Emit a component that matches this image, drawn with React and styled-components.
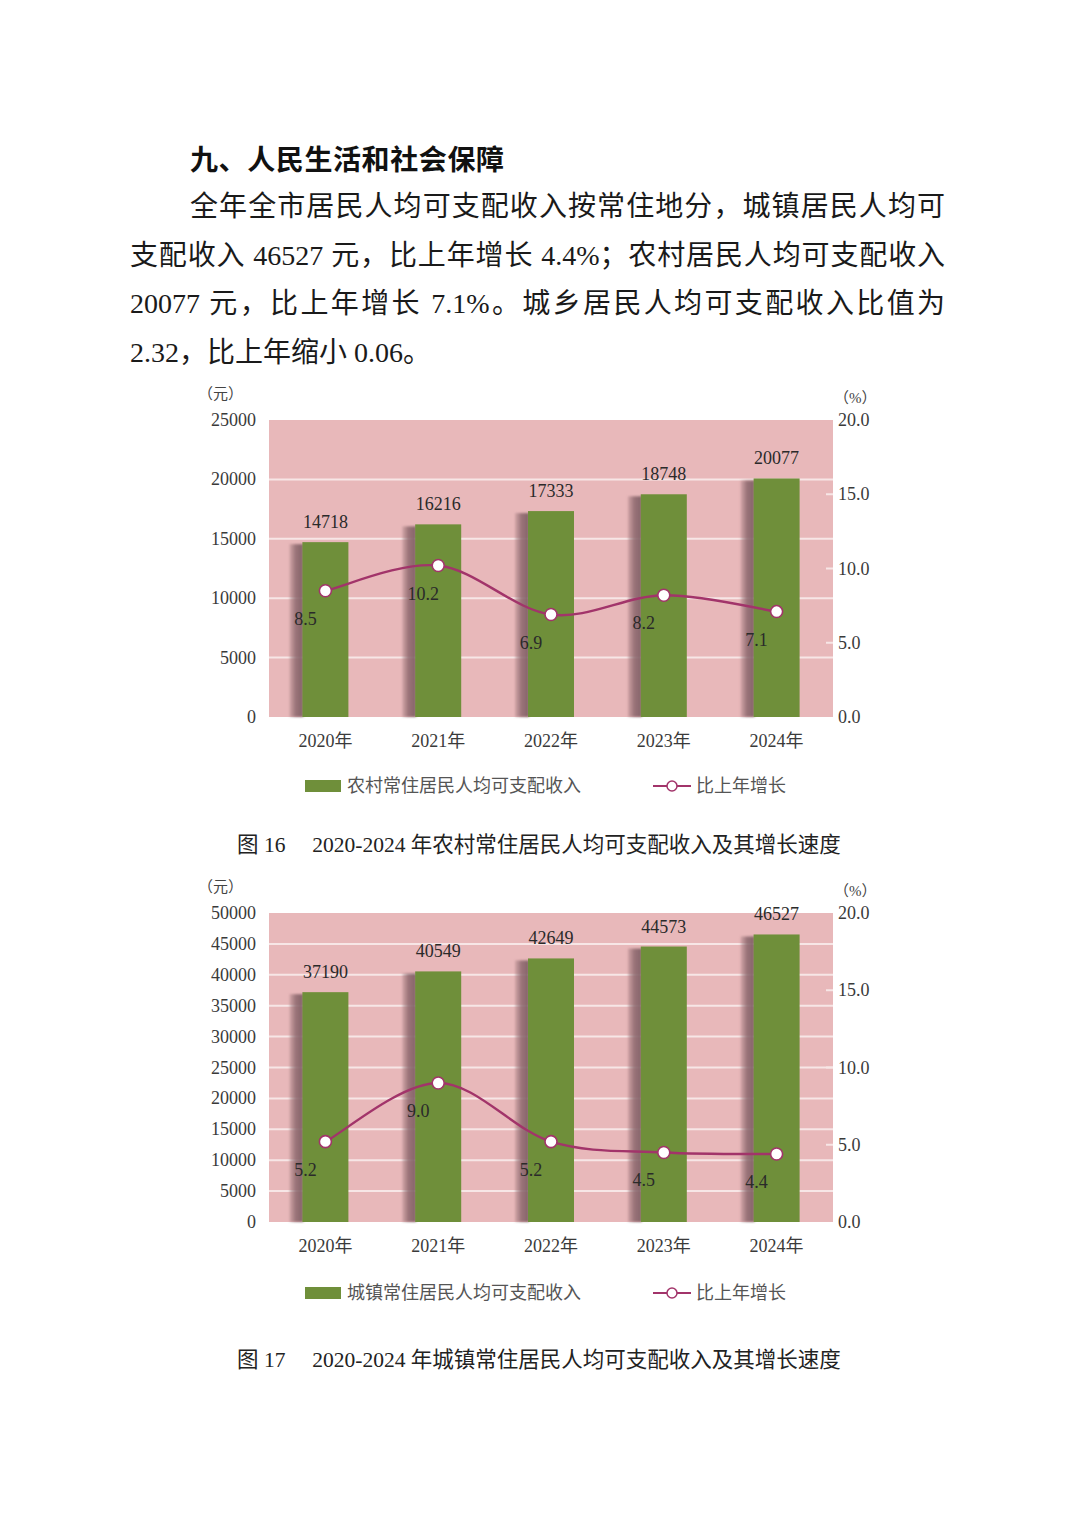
import React from "react";
import styled, { createGlobalStyle } from "styled-components";

const GlobalStyle = createGlobalStyle`
  html, body { margin: 0; padding: 0; background: #ffffff; }
  body { font-family: "Liberation Serif", "Noto Sans CJK SC", serif; color: #1a1a1a; }
`;

const Page = styled.main`
  width: 1074px;
  min-height: 1520px;
  box-sizing: border-box;
  padding: 134px 129px 0 130px;
`;

const Heading = styled.h2`
  margin: 0;
  padding-left: 60px;
  font-family: "Noto Sans CJK SC", sans-serif;
  font-weight: 700;
  font-size: 28px;
  letter-spacing: 0.6px;
  line-height: 49px;
  color: #111;
`;

const Para = styled.div`
  font-family: "Liberation Serif", "Noto Sans CJK SC", serif;
  font-size: 28px;
  line-height: 48.7px;
  color: #1a1a1a;
`;

const Line = styled.div`
  text-align: justify;
  text-align-last: ${(p) => (p.$last ? "left" : "justify")};
  text-indent: ${(p) => (p.$indent ? "60px" : "0")};
`;

const Figure = styled.figure`
  margin: ${(p) => p.$top}px 0 0 0;
  padding: 0;
`;

const ChartSvg = styled.svg`
  display: block;
  margin-left: 60px;
  overflow: visible;
`;

const AxisText = styled.text`
  font-family: "Liberation Serif", "Noto Sans CJK SC", serif;
  font-size: ${(p) => p.$size || 18}px;
  fill: #3a3a3a;
`;

const UnitText = styled.text`
  font-family: "Liberation Serif", "Noto Sans CJK SC", serif;
  font-size: 15px;
  fill: #444;
`;

const ValueText = styled.text`
  font-family: "Liberation Serif", "Noto Sans CJK SC", serif;
  font-size: 18px;
  fill: #2a2a2a;
`;

const Legend = styled.div`
  display: flex;
  align-items: center;
  gap: 72px;
  margin: ${(p) => p.$top}px 0 0 175px;
  height: 24px;
`;

const LegendItem = styled.div`
  display: flex;
  align-items: center;
  gap: ${(p) => p.$gap}px;
  font-family: "Liberation Serif", "Noto Sans CJK SC", serif;
  font-size: 18px;
  color: #555;
  line-height: 24px;
`;

const Swatch = styled.span`
  display: block;
  width: 36px;
  height: 12px;
  background: #6f8f3a;
`;

const Caption = styled.figcaption`
  margin: ${(p) => p.$top}px 0 0 107px;
  font-family: "Liberation Serif", "Noto Sans CJK SC", serif;
  font-size: 21.5px;
  line-height: 30px;
  color: #222;
  white-space: nowrap;
`;

const GREEN = "#6f8f3a";
const LINE = "#a2346a";
const PINK = "#e8b8ba";
const GRID = "#f7e6e6";

function smoothPath(pts) {
  let d = `M${pts[0][0]},${pts[0][1]}`;
  for (let i = 0; i < pts.length - 1; i++) {
    const p0 = pts[i - 1] || pts[i];
    const p1 = pts[i];
    const p2 = pts[i + 1];
    const p3 = pts[i + 2] || p2;
    const c1 = [p1[0] + (p2[0] - p0[0]) / 6, p1[1] + (p2[1] - p0[1]) / 6];
    const c2 = [p2[0] - (p3[0] - p1[0]) / 6, p2[1] - (p3[1] - p1[1]) / 6];
    d += ` C${c1[0]},${c1[1]} ${c2[0]},${c2[1]} ${p2[0]},${p2[1]}`;
  }
  return d;
}

function Chart({ id, years, values, rates, rateLabels, max, step, plotH, height }) {
  const L = 79;
  const R = 643;
  const T = 40;
  const B = T + plotH;
  const cw = (R - L) / values.length;
  const cx = (i) => L + cw * (i + 0.5);
  const yv = (v) => B - (v / max) * plotH;
  const yr = (r) => B - (r / 20) * plotH;
  const barW = 46;

  const leftTicks = [];
  for (let v = 0; v <= max; v += step) leftTicks.push(v);
  const rightTicks = [0, 5, 10, 15, 20];
  const pts = rates.map((r, i) => [cx(i), yr(r)]);

  return (
    <ChartSvg width="700" height={height} viewBox={`0 0 700 ${height}`}>
      <defs>
        <linearGradient id={`${id}-sh`} x1="0" x2="1" y1="0" y2="0">
          <stop offset="0" stopColor="#9a7478" stopOpacity="0.3" />
          <stop offset="0.45" stopColor="#8c676d" stopOpacity="0.85" />
          <stop offset="1" stopColor="#7f5f65" stopOpacity="0.95" />
        </linearGradient>
        <filter id={`${id}-blur`} x="-30%" y="-5%" width="160%" height="110%">
          <feGaussianBlur stdDeviation="1.2" />
        </filter>
      </defs>

      <UnitText x="8" y="19">（元）</UnitText>
      <UnitText x="644" y="23">（%）</UnitText>

      <rect x={L} y={T} width={R - L} height={plotH} fill={PINK} />

      {leftTicks
        .filter((v) => v > 0 && v < max)
        .map((v) => (
          <line key={v} x1={L} x2={R} y1={yv(v)} y2={yv(v)} stroke={GRID} strokeWidth="2" />
        ))}
      {rightTicks
        .filter((r) => r > 0 && r < 20)
        .map((r) => (
          <line key={r} x1={R - 7} x2={R} y1={yr(r)} y2={yr(r)} stroke={GRID} strokeWidth="2" />
        ))}

      {leftTicks.map((v) => (
        <AxisText key={v} x="66" y={yv(v) + 6} textAnchor="end">
          {v}
        </AxisText>
      ))}
      {rightTicks.map((r) => (
        <AxisText key={r} x="648" y={yr(r) + 6}>
          {r.toFixed(1)}
        </AxisText>
      ))}

      {values.map((v, i) => {
        const x = cx(i) - barW / 2;
        const top = yv(v);
        return (
          <g key={i}>
            <rect
              x={x - 13}
              y={top + 2}
              width="14"
              height={B - top - 2}
              fill={`url(#${id}-sh)`}
              filter={`url(#${id}-blur)`}
            />
            <rect x={x} y={top} width={barW} height={B - top} fill={GREEN} />
            <ValueText x={cx(i)} y={top - 14} textAnchor="middle">
              {v}
            </ValueText>
          </g>
        );
      })}

      <path d={smoothPath(pts)} fill="none" stroke={LINE} strokeWidth="2.4" />
      {pts.map((p, i) => (
        <circle key={i} cx={p[0]} cy={p[1]} r="6" fill="#fff" stroke={LINE} strokeWidth="1.6" />
      ))}
      {rateLabels.map((t, i) => (
        <ValueText
          key={i}
          x={pts[i][0] - (t.length > 3 ? 15 : 20)}
          y={pts[i][1] + 34}
          textAnchor="middle"
        >
          {t}
        </ValueText>
      ))}

      {years.map((yLabel, i) => (
        <AxisText key={yLabel} $size={18} x={cx(i)} y={B + 30} textAnchor="middle">
          {yLabel}
        </AxisText>
      ))}
    </ChartSvg>
  );
}

function LegendRow({ label, top }) {
  return (
    <Legend $top={top}>
      <LegendItem $gap={6}>
        <Swatch />
        <span>{label}</span>
      </LegendItem>
      <LegendItem $gap={5}>
        <svg width="38" height="14" viewBox="0 0 38 14">
          <line x1="0" x2="38" y1="7" y2="7" stroke={LINE} strokeWidth="2.2" />
          <circle cx="19" cy="7" r="5" fill="#fff" stroke={LINE} strokeWidth="1.5" />
        </svg>
        <span>比上年增长</span>
      </LegendItem>
    </Legend>
  );
}

const YEARS = ["2020年", "2021年", "2022年", "2023年", "2024年"];

export default function App() {
  return (
    <>
      <GlobalStyle />
      <Page>
        <Heading>九、人民生活和社会保障</Heading>
        <Para>
          <Line $indent>全年全市居民人均可支配收入按常住地分，城镇居民人均可</Line>
          <Line>支配收入 46527 元，比上年增长 4.4%；农村居民人均可支配收入</Line>
          <Line>20077 元，比上年增长 7.1%。城乡居民人均可支配收入比值为</Line>
          <Line $last>2.32，比上年缩小 0.06。</Line>
        </Para>

        <Figure $top={2}>
          <Chart
            id="rural"
            years={YEARS}
            values={[14718, 16216, 17333, 18748, 20077]}
            rates={[8.5, 10.2, 6.9, 8.2, 7.1]}
            rateLabels={["8.5", "10.2", "6.9", "8.2", "7.1"]}
            max={25000}
            step={5000}
            plotH={297}
            height={375}
          />
          <LegendRow label="农村常住居民人均可支配收入" top={19} />
          <Caption $top={32}>图 16{"\u3000 "}2020-2024 年农村常住居民人均可支配收入及其增长速度</Caption>
        </Figure>

        <Figure $top={13}>
          <Chart
            id="urban"
            years={YEARS}
            values={[37190, 40549, 42649, 44573, 46527]}
            rates={[5.2, 9.0, 5.2, 4.5, 4.4]}
            rateLabels={["5.2", "9.0", "5.2", "4.5", "4.4"]}
            max={50000}
            step={5000}
            plotH={309}
            height={385}
          />
          <LegendRow label="城镇常住居民人均可支配收入" top={23} />
          <Caption $top={40}>图 17{"\u3000 "}2020-2024 年城镇常住居民人均可支配收入及其增长速度</Caption>
        </Figure>
      </Page>
    </>
  );
}
